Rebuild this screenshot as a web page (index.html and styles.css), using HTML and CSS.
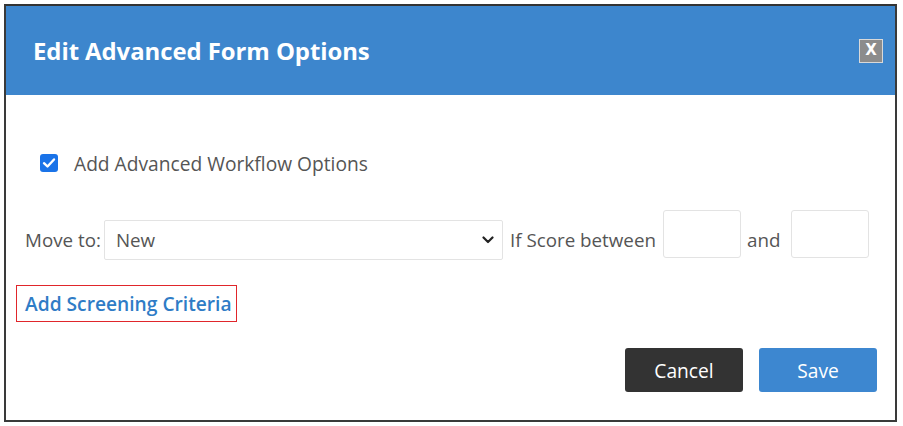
FILE: index.html
```html
<!DOCTYPE html>
<html>
<head>
<meta charset="utf-8">
<link rel="stylesheet" href="styles.css">
</head>
<body>
<div class="dialog">
  <div class="header">
    <h1 class="title">Edit Advanced Form Options</h1>
    <span class="close">X</span>
  </div>
  <div class="content">
    <label class="check-row">
      <span class="checkbox">
        <svg viewBox="0 0 18 18" width="18" height="18"><path d="M4 9.2 L7.5 12.5 L14 5.5" fill="none" stroke="#fff" stroke-width="2.4" stroke-linecap="round" stroke-linejoin="round"/></svg>
      </span>
      <span class="check-label">Add Advanced Workflow Options</span>
    </label>
    <div class="move-row">
      <span class="lbl">Move to:</span>
      <div class="select">
        <span>New</span>
        <svg class="chev" viewBox="0 0 12 8" width="12" height="8"><path d="M1.5 1.5 L6 6 L10.5 1.5" fill="none" stroke="#222" stroke-width="2.2" stroke-linecap="round" stroke-linejoin="round"/></svg>
      </div>
      <span class="lbl lbl-score">If Score between</span>
      <div class="num"></div>
      <span class="lbl lbl-and">and</span>
      <div class="num num-2"></div>
    </div>
    <div class="link-box"><a class="link">Add Screening Criteria</a></div>
    <div class="actions">
      <button class="btn btn-cancel">Cancel</button>
      <button class="btn btn-save">Save</button>
    </div>
  </div>
</div>
</body>
</html>
```
FILE: styles.css
```css
html, body {
  margin: 0;
  padding: 0;
  background: #fff;
}
body {
  font-family: "Open Sans", "Noto Sans", sans-serif;
  color: #555;
}
.dialog {
  margin: 4px 0 0 4px;
  width: 893px;
  height: 418px;
  box-sizing: border-box;
  border: 2px solid #3a3a3a;
  border-top-color: #333;
  display: flex;
  flex-direction: column;
}
.header {
  background: #3d86cd;
  height: 89px;
  display: flex;
  align-items: center;
  justify-content: space-between;
  padding: 0 12px 0 27px;
  flex-shrink: 0;
}
.title {
  margin: 0;
  color: #fff;
  font-size: 23.9px;
  font-weight: 700;
  letter-spacing: -0.05px;
}
.close {
  width: 22px;
  height: 22px;
  border: 1px solid #d9d9d9;
  background: #8c8c8c;
  color: #fff;
  font-family: "DejaVu Sans", sans-serif;
  font-weight: 700;
  font-size: 15px;
  display: flex;
  align-items: center;
  justify-content: center;
  line-height: 1;
}
.content {
  flex: 1;
  display: flex;
  flex-direction: column;
  padding: 58px 18px 0 19px;
}
.check-row {
  display: flex;
  align-items: center;
  height: 20px;
  padding-left: 15px;
}
.checkbox {
  width: 18px;
  height: 18px;
  border-radius: 3px;
  background: #1a73e8;
  display: flex;
  flex-shrink: 0;
}
.check-label {
  margin-left: 16px;
  font-size: 19.2px;
  color: #555;
}
.move-row {
  display: flex;
  align-items: flex-start;
  margin-top: 37px;
  height: 50px;
}
.lbl {
  font-size: 18.8px;
  line-height: 40px;
  margin-top: 10px;
  color: #555;
  white-space: nowrap;
}
.select {
  margin-top: 10px;
  margin-left: 3px;
  width: 399px;
  height: 40px;
  box-sizing: border-box;
  border: 1px solid #e3e3e3;
  border-radius: 2px;
  display: flex;
  align-items: center;
  justify-content: space-between;
  padding: 0 8px 0 11px;
  font-size: 18.8px;
  color: #555;
  flex-shrink: 0;
}
.chev {
  display: block;
}
.lbl-score {
  margin-left: 7px;
}
.num {
  width: 78px;
  height: 48px;
  box-sizing: border-box;
  border: 1px solid #e3e3e3;
  border-radius: 3px;
  margin-left: 7px;
  flex-shrink: 0;
}
.lbl-and {
  margin-left: 6px;
}
.num-2 {
  margin-left: 11px;
}
.link-box {
  margin-top: 25px;
  margin-left: -9px;
  align-self: flex-start;
  border: 1px solid #e0262b;
  height: 37px;
  box-sizing: border-box;
  padding: 0 4px 0 8px;
  display: flex;
  align-items: center;
}
.link {
  color: #2f7cc6;
  font-weight: 600;
  font-size: 19.2px;
  text-decoration: none;
}
.actions {
  display: flex;
  justify-content: flex-end;
  gap: 16px;
  margin-top: 26px;
}
.btn {
  width: 118px;
  height: 44px;
  border: none;
  border-radius: 3px;
  color: #fff;
  font-family: "Open Sans", "Noto Sans", sans-serif;
  font-size: 19.2px;
  font-weight: 400;
}
.btn-cancel {
  background: #333;
}
.btn-save {
  background: #3d87d0;
}
```
